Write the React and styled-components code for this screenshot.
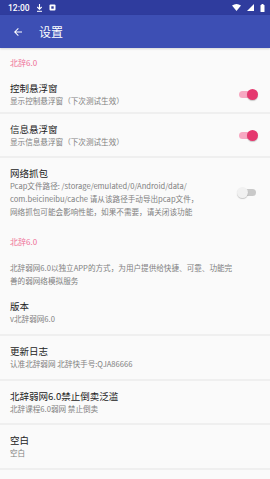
import React from "react";
import styled, { createGlobalStyle } from "styled-components";

const Global = createGlobalStyle`
  body {
    margin: 0;
    background: #fafafa;
    font-family: "Roboto", "Noto Sans CJK SC", sans-serif;
  }
`;

const Page = styled.div`
  width: 270px;
  height: 479px;
  overflow: hidden;
  background: #fafafa;
`;

const StatusBar = styled.div`
  height: 15px;
  background: #2f3c9e;
  display: flex;
  align-items: center;
  padding: 0 5px 0 8px;
  color: #fff;
  font-size: 8.5px;
  font-weight: 500;
  gap: 6px;
`;

const Spacer = styled.div`
  flex: 1;
`;

const Toolbar = styled.div`
  height: 33px;
  background: #3d4fb4;
  display: flex;
  align-items: center;
  padding: 0 12px;
  gap: 15px;
  color: #fff;
  box-shadow: 0 1px 2px rgba(0, 0, 0, 0.15);
`;

const Title = styled.div`
  font-size: 12px;
  font-family: "Noto Sans CJK SC", sans-serif;
`;

const Category = styled.div`
  height: ${(p) => p.h}px;
  display: flex;
  align-items: center;
  padding: 0 10px;
  font-size: 8px;
  color: #ef6f97;
  font-family: "Noto Sans CJK SC", sans-serif;
`;

const Item = styled.div`
  height: ${(p) => p.h}px;
  display: flex;
  align-items: center;
  padding: 0 14px 0 10px;
  border-bottom: ${(p) => (p.noLine ? "none" : "2px solid #efefef")};
  box-sizing: border-box;
`;

const Texts = styled.div`
  flex: 1;
  display: flex;
  flex-direction: column;
  font-family: "Noto Sans CJK SC", sans-serif;
`;

const ItemTitle = styled.div`
  font-size: 9.5px;
  line-height: 12px;
  color: #222;
`;

const Sub = styled.div`
  font-size: 7.6px;
  line-height: 13px;
  color: #808080;
  white-space: nowrap;
`;

const Track = styled.div`
  width: 17px;
  height: 7px;
  border-radius: 4px;
  background: ${(p) => (p.on ? "#f7a8c2" : "#c9c9c9")};
  position: relative;
  flex-shrink: 0;
`;

const Thumb = styled.div`
  position: absolute;
  top: -2px;
  ${(p) => (p.on ? "right: -2px;" : "left: -2px;")}
  width: 11px;
  height: 11px;
  border-radius: 50%;
  background: ${(p) => (p.on ? "#e5386f" : "#f1f1f1")};
  box-shadow: 0 1px 1px rgba(0, 0, 0, 0.2);
`;

const Switch = ({ on }) => (
  <Track on={on}>
    <Thumb on={on} />
  </Track>
);

const Row = ({ title, children, h, toggle, noLine }) => (
  <Item h={h} noLine={noLine}>
    <Texts>
      {title && <ItemTitle>{title}</ItemTitle>}
      {children}
    </Texts>
    {toggle !== undefined && <Switch on={toggle} />}
  </Item>
);

export default function App() {
  return (
    <Page>
      <Global />
      <StatusBar>
        <span>12:00</span>
        <svg width="7" height="8" viewBox="0 0 7 8">
          <path d="M3.5 0v5M1.3 3l2.2 2.2L5.7 3" stroke="#fff" strokeWidth="1.1" fill="none" />
          <rect x="1" y="6.8" width="5" height="1" fill="#fff" />
        </svg>
        <svg width="7" height="7" viewBox="0 0 7 7">
          <rect x="0.5" y="0.5" width="6" height="6" rx="1" fill="#fff" />
          <rect x="2.3" y="2.3" width="2.4" height="2.4" fill="#2f3c9e" />
        </svg>
        <Spacer />
        <svg width="9" height="7" viewBox="0 0 9 7">
          <path d="M0 1.5Q4.5-1.5 9 1.5L4.5 7Z" fill="#fff" />
        </svg>
        <svg width="7" height="7" viewBox="0 0 7 7">
          <path d="M7 0V7H0Z" fill="#fff" />
        </svg>
        <svg width="5" height="8" viewBox="0 0 5 8">
          <rect x="0.5" y="1" width="4" height="7" rx="0.5" fill="#fff" />
          <rect x="1.5" y="0" width="2" height="1" fill="#fff" />
        </svg>
      </StatusBar>
      <Toolbar>
        <svg width="12" height="12" viewBox="0 0 24 24">
          <path d="M20 11H7.8l5.6-5.6L12 4l-8 8 8 8 1.4-1.4L7.8 13H20z" fill="#fff" />
        </svg>
        <Title>设置</Title>
      </Toolbar>
      <Category h={29}>北辞6.0</Category>
      <Row h={37} title="控制悬浮窗" toggle={true}>
        <Sub>显示控制悬浮窗（下次测试生效）</Sub>
      </Row>
      <Row h={44} title="信息悬浮窗" toggle={true}>
        <Sub>显示信息悬浮窗（下次测试生效）</Sub>
      </Row>
      <Row h={68} title="网络抓包" toggle={false} noLine>
        <Sub>
          Pcap文件路径: /storage/emulated/0/Android/data/
          <br />
          com.beicineibu/cache 请从该路径手动导出pcap文件，
          <br />
          网络抓包可能会影响性能，如果不需要，请关闭该功能
        </Sub>
      </Row>
      <Category h={30}>北辞6.0</Category>
      <Row h={35} noLine>
        <Sub>
          北辞弱网6.0以独立APP的方式，为用户提供给快捷、可靠、功能完
          <br />
          善的弱网络模拟服务
        </Sub>
      </Row>
      <Row h={45} title="版本">
        <Sub>v北辞弱网6.0</Sub>
      </Row>
      <Row h={45} title="更新日志">
        <Sub>认准北辞弱网 北辞快手号:QJA86666</Sub>
      </Row>
      <Row h={44} title="北辞弱网6.0禁止倒卖泛滥">
        <Sub>北辞课程6.0弱网 禁止倒卖</Sub>
      </Row>
      <Row h={45} title="空白">
        <Sub>空白</Sub>
      </Row>
    </Page>
  );
}
